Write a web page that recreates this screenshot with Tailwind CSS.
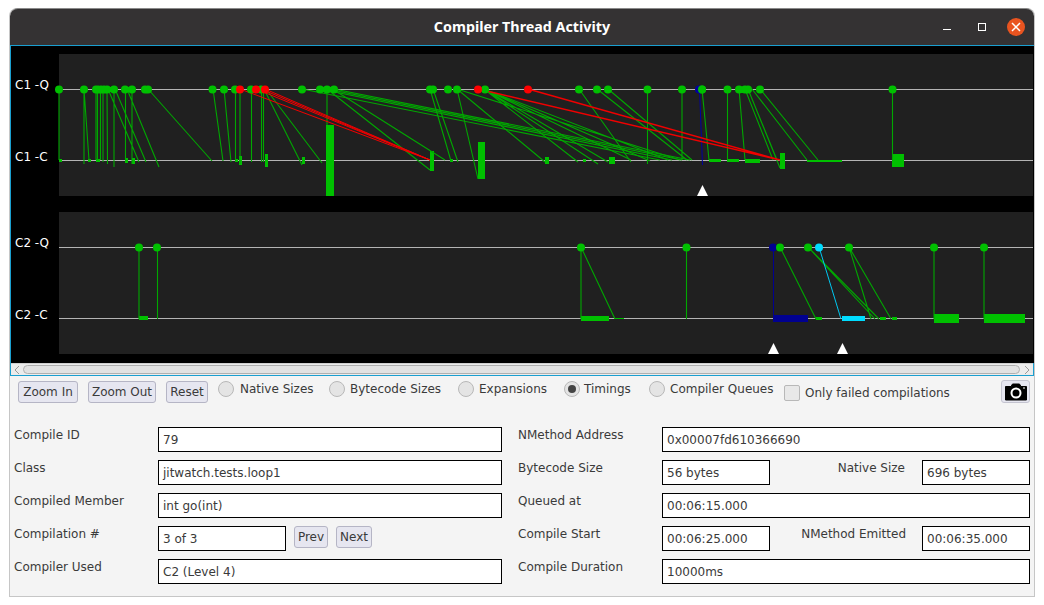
<!DOCTYPE html>
<html lang="en">

<head>
    <meta charset="UTF-8">
    <meta name="viewport" content="width=device-width, initial-scale=1.0">
    <title>Compiler Thread Activity</title>
    <script src="https://cdn.jsdelivr.net/npm/@tailwindcss/browser@4"></script>
</head>

<body class="bg-white font-['DejaVu_Sans',sans-serif] text-[12px] leading-[16px] text-[#3a3a3a]">
    <div class="pt-[8px] pl-[9px]">
        <div class="w-[1026px] h-[589px] flex flex-col border-x border-b border-[#c6c6c6] rounded-t-[8px] bg-[#f4f4f4]">
            <!-- Title bar -->
            <div class="relative h-[37px] shrink-0 flex items-center justify-center rounded-t-[8px] bg-[#343233] border-t border-[#8a8a8a]">
                <span class="font-['Noto_Sans',sans-serif] font-bold text-[14.3px] text-white pb-[1px]">Compiler Thread Activity</span>
                <svg class="absolute right-[7px] top-[7px]" width="90" height="22" viewBox="0 0 90 22">
                    <path d="M6 13.500h8" stroke="#fff" stroke-width="1"/>
                    <rect x="41.500" y="7.500" width="7" height="7" fill="none" stroke="#fff" stroke-width="1"/>
                    <circle cx="79" cy="11" r="9" fill="#e95420"/>
                    <path d="M75 7l8 8M83 7l-8 8" stroke="#fff" stroke-width="1.500"/>
                </svg>
            </div>

            <!-- Chart scroll pane -->
            <div class="h-[331px] shrink-0 flex flex-col border border-[#1a9fd0]">
                <svg class="block shrink-0" width="1023" height="317" viewBox="11 46 1023 317">
                    <rect x="11" y="46" width="1023" height="317" fill="#000"/>
                    <rect x="59" y="54" width="974" height="142" fill="#202020"/>
                    <rect x="59" y="212" width="974" height="142" fill="#202020"/>
                    <path d="M59 89.500H1033M59 160.500H1033M59 247.500H1033M59 318.500H1033" stroke="#b4b4b4" stroke-width="1"/>
                    <g font-family="DejaVu Sans" font-size="12" fill="#fff">
                        <text x="15" y="89">C1 -Q</text>
                        <text x="15" y="161">C1 -C</text>
                        <text x="15" y="247">C2 -Q</text>
                        <text x="15" y="319">C2 -C</text>
                    </g>

                    <!-- C1 compile bars -->
                    <g fill="#00c000">
                        <rect x="59" y="159" width="3" height="3"/><rect x="88" y="159" width="3" height="3"/>
                        <rect x="96" y="159" width="4" height="3"/><rect x="125" y="158" width="3" height="5"/>
                        <rect x="132" y="158" width="3" height="6"/><rect x="235" y="159" width="3" height="3"/>
                        <rect x="239" y="156" width="3" height="9"/><rect x="265" y="154" width="3" height="13"/>
                        <rect x="302" y="157" width="3" height="7"/><rect x="326" y="125" width="8" height="71"/>
                        <rect x="430" y="151" width="4" height="20"/><rect x="450" y="159" width="3" height="3"/>
                        <rect x="478" y="142" width="7" height="37"/><rect x="545" y="157" width="4" height="7"/>
                        <rect x="609" y="157" width="6" height="7"/><rect x="583" y="159" width="3" height="3"/>
                        <rect x="709" y="159" width="12" height="3"/><rect x="727" y="159" width="12" height="3"/>
                        <rect x="745" y="159" width="15" height="4"/><rect x="780" y="153" width="5" height="16"/>
                        <rect x="807" y="160" width="35" height="2"/><rect x="892" y="154" width="12" height="13"/>
                    </g>

                    <!-- C1 queue to compile lines -->
                    <g fill="none" stroke="#00a800" stroke-width="1.100">
                        <path d="M59 89V160M84 89V164M84 89L89 160M96 89V160M97.500 89V160M100.500 89V160M103 89V162M107 89L107.500 164"/>
                        <path d="M108 89L139 162M114 89V167M115 89L146 162M125.500 89V160M132 89V164M127 89L159 167"/>
                        <path d="M148 89L212 161M213 89L223 161M224 89L231 162M235.500 89V161M240 89V164M251.500 89V162M261.500 89V162M263.500 89V162"/>
                        <path d="M264 89L302 165M266 89L322 163"/>
                        <path d="M302 89L660 160M320 89L672 160M327 89L682 160M334 89L690 160"/>
                        <path d="M327 89L430 170M334 90L445 160M327 89V125M430 89L451 161M433 89L458 162M457 89L478 179"/>
                        <path d="M457 89L545 162M457 89L680 160M484 89L578 162M484 89L598 164M484 89L608 162M484 89L631 160M484 89L650 161M484 89L668 160"/>
                        <path d="M579 89L631 162M597 89L687 160M608 89L692 160M647.500 89V164M682 89V160"/>
                        <path d="M702 89L709 160M727.500 89V160M739 89L745 160M745 89L773 160M748 89L777 160M748 89L780 168M752 89L807 160M760 89L818 160M892.500 89V160"/>
                    </g>
                    <path d="M699.500 89L702.500 165" fill="none" stroke="#0000a0" stroke-width="1"/>
                    <g fill="none" stroke="#f00000" stroke-width="1">
                        <path d="M240 89L430 160M256 89L430 160M261 89L430 160M265 89L430 160"/>
                        <path d="M478 89L780 160M528 89L780 160" stroke-width="1.400"/>
                    </g>

                    <!-- C1 queue dots -->
                    <path stroke="#00c000" stroke-width="8" stroke-linecap="round" d="M59 89.500h0M84 89.500h0M96 89.500h0M98 89.500h0M101 89.500h0M104 89.500h0M107 89.500h0M114 89.500h0M125 89.500h0M132 89.500h0M145 89.500h0M148 89.500h0M212.500 89.500h0M224 89.500h0M235 89.500h0M251 89.500h0M261 89.500h0M302 89.500h0M320 89.500h0M327 89.500h0M334 89.500h0M430 89.500h0M433 89.500h0M448 89.500h0M457 89.500h0M485 89.500h0M579 89.500h0M597 89.500h0M608 89.500h0M647.500 89.500h0M682 89.500h0M702 89.500h0M727.500 89.500h0M739 89.500h0M745 89.500h0M748 89.500h0M760 89.500h0M892.500 89.500h0"/>
                    <circle cx="699" cy="89.500" r="4" fill="#0000a0"/>
                    <circle cx="702" cy="89.500" r="4" fill="#00c000"/>
                    <path stroke="#ff0000" stroke-width="8" stroke-linecap="round" d="M240 89.500h0M256 89.500h0M265 89.500h0M478 89.500h0M528 89.500h0"/>
                    <path d="M702.500 185L708 196H697Z" fill="#fff"/>

                    <!-- C2 lines and bars -->
                    <g fill="#00c000">
                        <rect x="139" y="316" width="9" height="4"/><rect x="581" y="316" width="28" height="5"/>
                        <rect x="816" y="317" width="6" height="3"/><rect x="880" y="317" width="6" height="3"/>
                        <rect x="892" y="317" width="5" height="3"/><rect x="934" y="314" width="25" height="9"/>
                        <rect x="984" y="314" width="41" height="9"/><rect x="615" y="318" width="9" height="1"/>
                    </g>
                    <rect x="773" y="315" width="35" height="7" fill="#000090"/>
                    <rect x="842" y="316" width="23" height="5" fill="#00dcff"/>
                    <g fill="none" stroke="#00a800" stroke-width="1.100">
                        <path d="M139 247V319M157.500 247V319M581 247V319M581 247L615 319M686.500 247V319"/>
                        <path d="M780 247L816 319M808 247L875 319M808 247L879 319M849 247L871 319M849 247L891 319M934 247V319M984 247V319"/>
                    </g>
                    <path d="M773.500 247V315" stroke="#000090" stroke-width="1"/>
                    <path d="M819 247L841 319" stroke="#00c8f0" stroke-width="1"/>
                    <circle cx="773" cy="247.500" r="4" fill="#000090"/>
                    <path stroke="#00c000" stroke-width="8" stroke-linecap="round" d="M139 247.500h0M157 247.500h0M581 247.500h0M686.500 247.500h0M780 247.500h0M808 247.500h0M849 247.500h0M934 247.500h0M984 247.500h0"/>
                    <circle cx="819" cy="247.500" r="4" fill="#00dcff"/>
                    <path d="M773.500 343L779 354H768Z" fill="#fff"/>
                    <path d="M842.500 343L848 354H837Z" fill="#fff"/>
                </svg>
                <!-- Horizontal scrollbar -->
                <div class="flex-1 flex items-center bg-[#ececec] border-t border-[#d0d0d0]">
                    <svg class="shrink-0" width="12" height="10" viewBox="0 0 12 10"><path d="M8 1L4 5l4 4" fill="none" stroke="#9a9a9a"/></svg>
                    <div class="flex-1 h-[9px] rounded-full border border-[#b0b0b0] bg-[#e2e2e2]"></div>
                    <svg class="shrink-0" width="13" height="10" viewBox="0 0 13 10"><path d="M5 1l4 4-4 4" fill="none" stroke="#9a9a9a"/></svg>
                </div>
            </div>

            <!-- Toolbar -->
            <div class="h-[51px] shrink-0 flex items-start pl-[8px] pt-[3px] pr-[4px]">
                <button class="mt-[2px] w-[60px] h-[22px] mr-[10px] rounded-[3px] border border-[#b5b5c5] bg-[#e6e6f0]">Zoom In</button>
                <button class="mt-[2px] w-[68px] h-[22px] mr-[10px] rounded-[3px] border border-[#b5b5c5] bg-[#e6e6f0]">Zoom Out</button>
                <button class="mt-[2px] w-[42px] h-[22px] mr-[10px] rounded-[3px] border border-[#b5b5c5] bg-[#e6e6f0]">Reset</button>
                <div class="flex items-center h-[19px] w-[111px]">
                    <span class="w-[16px] h-[16px] rounded-full border border-[#b8b8b8] bg-[#e4e4e4] mr-[6px]"></span>Native Sizes
                </div>
                <div class="flex items-center h-[19px] w-[129px]">
                    <span class="w-[16px] h-[16px] rounded-full border border-[#b8b8b8] bg-[#e4e4e4] mr-[5px]"></span>Bytecode Sizes
                </div>
                <div class="flex items-center h-[19px] w-[106px]">
                    <span class="w-[16px] h-[16px] rounded-full border border-[#b8b8b8] bg-[#e4e4e4] mr-[5px]"></span>Expansions
                </div>
                <div class="flex items-center h-[19px] w-[85px]">
                    <span class="w-[16px] h-[16px] rounded-full border border-[#b8b8b8] bg-[#e4e4e4] mr-[4px] flex items-center justify-center"><span class="w-[8px] h-[8px] rounded-full bg-[#444]"></span></span>Timings
                </div>
                <div class="flex items-center h-[19px] w-[135px]">
                    <span class="w-[16px] h-[16px] rounded-full border border-[#b8b8b8] bg-[#e4e4e4] mr-[5px]"></span>Compiler Queues
                </div>
                <div class="flex items-center h-[23px] pt-[4px] w-[217px]">
                    <span class="w-[16px] h-[16px] rounded-[2px] border border-[#b8b8b8] bg-[#e8e8e8] mr-[5px]"></span>Only failed compilations
                </div>
                <button class="mt-[1px] w-[29px] h-[23px] rounded-[3px] border border-[#c4c4d0] bg-[#e6e6f0] flex items-center justify-center">
                    <svg width="24" height="18" viewBox="0 0 24 18">
                        <path d="M1.500 3.500H7L8.500 1H15.500L17 3.500H22.500V17H1.500Z" fill="#000" stroke="#000"/>
                        <circle cx="12" cy="10" r="4.500" fill="none" stroke="#fff" stroke-width="2"/>
                        <path d="M19 5h2" stroke="#fff"/>
                    </svg>
                </button>
            </div>

            <!-- Compilation details -->
            <div class="grid grid-cols-[504px_512px] pl-[4px]">
                <div class="flex flex-col gap-[8px]">
                    <div class="flex items-start h-[25px]"><span class="w-[144px]">Compile ID</span><div class="w-[344px] h-[25px] flex items-center px-[4px] bg-white border border-black">79</div></div>
                    <div class="flex items-start h-[25px]"><span class="w-[144px]">Class</span><div class="w-[344px] h-[25px] flex items-center px-[4px] bg-white border border-black">jitwatch.tests.loop1</div></div>
                    <div class="flex items-start h-[25px]"><span class="w-[144px]">Compiled Member</span><div class="w-[344px] h-[25px] flex items-center px-[4px] bg-white border border-black">int go(int)</div></div>
                    <div class="flex items-start h-[25px]">
                        <span class="w-[144px]">Compilation #</span>
                        <div class="w-[128px] h-[25px] flex items-center px-[4px] bg-white border border-black">3 of 3</div>
                        <button class="ml-[8px] w-[34px] h-[22px] rounded-[3px] border border-[#b5b5c5] bg-[#e6e6f0]">Prev</button>
                        <button class="ml-[8px] w-[36px] h-[22px] rounded-[3px] border border-[#b5b5c5] bg-[#e6e6f0]">Next</button>
                    </div>
                    <div class="flex items-start h-[25px]"><span class="w-[144px]">Compiler Used</span><div class="w-[344px] h-[25px] flex items-center px-[4px] bg-white border border-black">C2 (Level 4)</div></div>
                </div>
                <div class="flex flex-col gap-[8px]">
                    <div class="flex items-start h-[25px]"><span class="w-[144px]">NMethod Address</span><div class="w-[368px] h-[25px] flex items-center px-[4px] bg-white border border-black">0x00007fd610366690</div></div>
                    <div class="flex items-start h-[25px]">
                        <span class="w-[144px]">Bytecode Size</span>
                        <div class="w-[108px] h-[25px] flex items-center px-[4px] bg-white border border-black">56 bytes</div>
                        <span class="w-[135px] text-right">Native Size</span>
                        <div class="ml-[17px] w-[108px] h-[25px] flex items-center px-[4px] bg-white border border-black">696 bytes</div>
                    </div>
                    <div class="flex items-start h-[25px]"><span class="w-[144px]">Queued at</span><div class="w-[368px] h-[25px] flex items-center px-[4px] bg-white border border-black">00:06:15.000</div></div>
                    <div class="flex items-start h-[25px]">
                        <span class="w-[144px]">Compile Start</span>
                        <div class="w-[108px] h-[25px] flex items-center px-[4px] bg-white border border-black">00:06:25.000</div>
                        <span class="w-[136px] text-right">NMethod Emitted</span>
                        <div class="ml-[16px] w-[108px] h-[25px] flex items-center px-[4px] bg-white border border-black">00:06:35.000</div>
                    </div>
                    <div class="flex items-start h-[25px]"><span class="w-[144px]">Compile Duration</span><div class="w-[368px] h-[25px] flex items-center px-[4px] bg-white border border-black">10000ms</div></div>
                </div>
            </div>
        </div>
    </div>
</body>

</html>
